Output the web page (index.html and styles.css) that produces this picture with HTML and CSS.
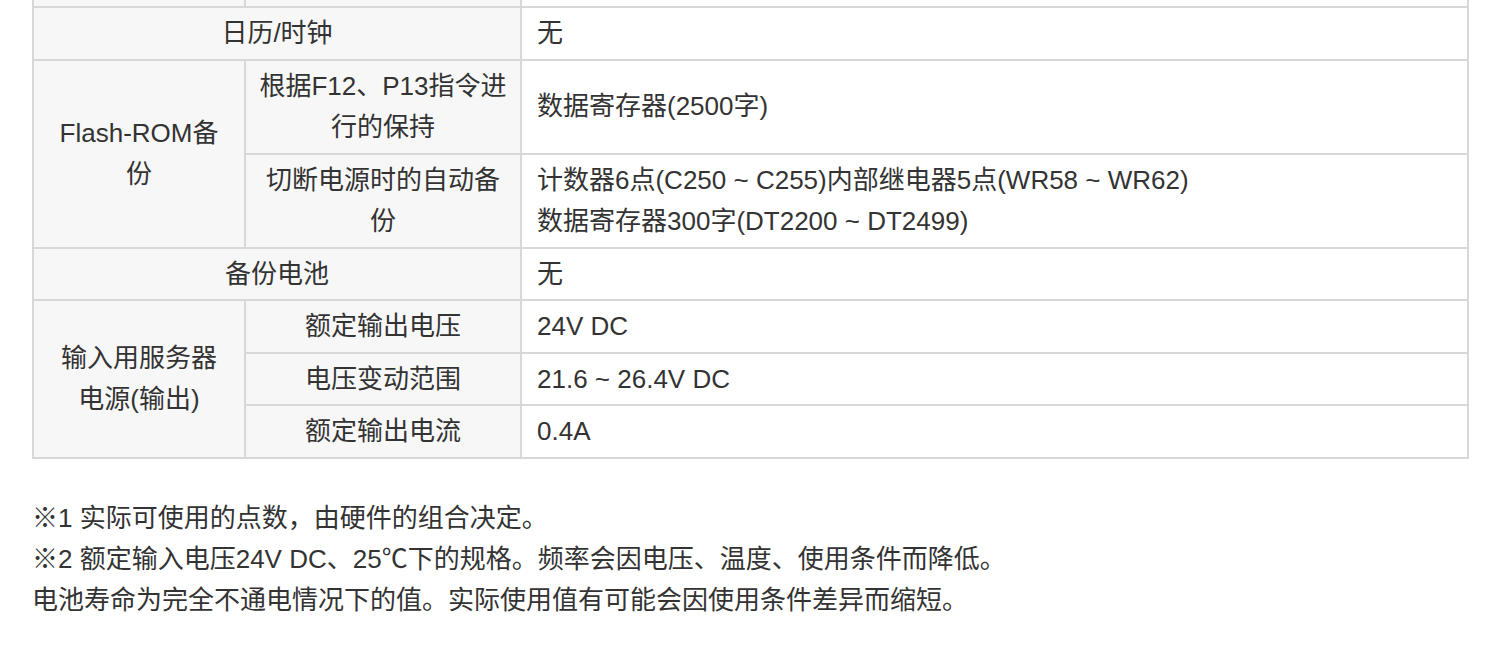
FILE: index.html
```html
<!DOCTYPE html>
<html lang="zh">
<head>
  <meta charset="UTF-8" />
  <meta name="viewport" content="width=device-width, initial-scale=1" />
  <title>规格</title>
  <link rel="stylesheet" href="styles.css">
</head>
<body>

  <div class="spec-container">
    <table class="spec-table">
      <colgroup>
        <col class="col-a" />
        <col class="col-b" />
        <col />
      </colgroup>
      <tr class="prev-row">
        <th class="label"></th>
        <th class="label sub"></th>
        <td></td>
      </tr>
      <tr>
        <th class="label" colspan="2">日历/时钟</th>
        <td>无</td>
      </tr>
      <tr>
        <th class="label" rowspan="2">Flash-ROM备份</th>
        <th class="label sub">根据F12、P13指令进行的保持</th>
        <td>数据寄存器(2500字)</td>
      </tr>
      <tr>
        <th class="label sub">切断电源时的自动备份</th>
        <td>计数器6点(C250 ~ C255)内部继电器5点(WR58 ~ WR62)<br>数据寄存器300字(DT2200 ~ DT2499)</td>
      </tr>
      <tr>
        <th class="label" colspan="2">备份电池</th>
        <td>无</td>
      </tr>
      <tr>
        <th class="label" rowspan="3">输入用服务器电源(输出)</th>
        <th class="label sub">额定输出电压</th>
        <td>24V DC</td>
      </tr>
      <tr>
        <th class="label sub">电压变动范围</th>
        <td>21.6 ~ 26.4V DC</td>
      </tr>
      <tr>
        <th class="label sub">额定输出电流</th>
        <td>0.4A</td>
      </tr>
    </table>

    <div class="notes">
      <p>※1 实际可使用的点数，由硬件的组合决定。</p>
      <p>※2 额定输入电压24V DC、25℃下的规格。频率会因电压、温度、使用条件而降低。</p>
      <p>电池寿命为完全不通电情况下的值。实际使用值有可能会因使用条件差异而缩短。</p>
    </div>
  </div>

</body>
</html>
```

FILE: styles.css
```css
body {
  font-family: 'Liberation Sans', Arial, 'Noto Sans CJK SC', sans-serif;
  background: white;
  color: #333;
  margin: 0;
  font-size: 26px;
  line-height: 41px;
}
.spec-container {
  padding: 0 31px 0 32px;
  overflow: hidden;
}
.spec-table {
  width: 100%;
  border-collapse: collapse;
  margin-top: -46px;
  table-layout: fixed;
  line-height: 41.5px;
}
.col-a {
  width: 212px;
}
.col-b {
  width: 276px;
}
.spec-table th,
.spec-table td {
  border: 2px solid #d8d8d8;
  padding: 5px 15px 4px;
  vertical-align: middle;
}
.spec-table th.sub {
  padding-left: 12px;
  padding-right: 12px;
}
.prev-row th,
.prev-row td {
  height: 41px;
}
.label {
  background: #f7f7f7;
  font-weight: normal;
  text-align: center;
}
.notes {
  margin-top: 39px;
}
.notes p {
  margin: 0;
}
```
